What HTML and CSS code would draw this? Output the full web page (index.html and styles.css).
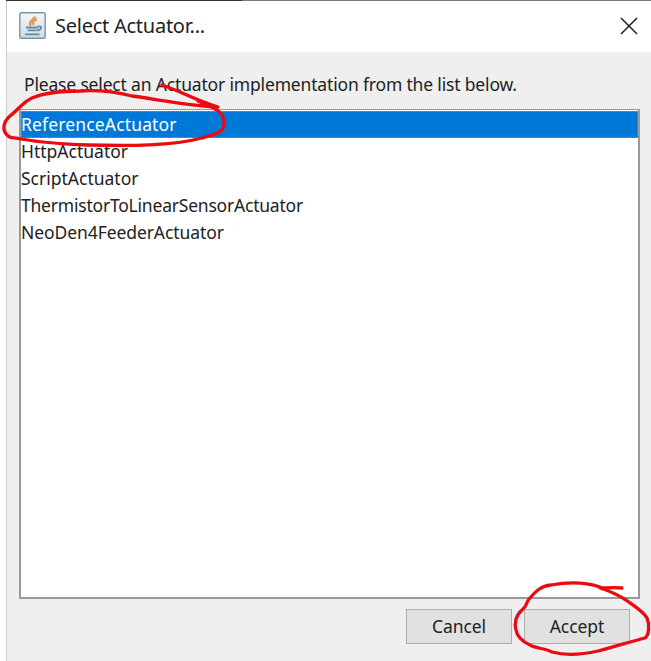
FILE: index.html
```html
<!DOCTYPE html>
<html lang="en">
<head>
<meta charset="utf-8">
<title>Select Actuator...</title>
<link rel="stylesheet" href="styles.css">
</head>
<body>
<div class="backdrop"></div>
<main class="dialog">
  <header class="titlebar">
    <svg class="java" viewBox="0 0 27 27">
      <defs><linearGradient id="g" x1="0" y1="0" x2="0" y2="1"><stop offset="0" stop-color="#f4f6f7"/><stop offset="1" stop-color="#cfdde6"/></linearGradient></defs>
      <rect x=".8" y=".8" width="25.4" height="25.4" rx="1.5" fill="url(#g)" stroke="#7893a6" stroke-width="1.4"/>
      <path d="M15.500 4.500C17 7.500 8 9 12 14M18 7.500C13 9 13 10.500 15 13" fill="none" stroke="#e39a58" stroke-width="2.600"/>
      <path d="M7 15.500H19M8.500 18.300H17.500M19 14.500C24 13.500 22.500 18 18 18.500M6 22.300H20.500" fill="none" stroke="#6389a3" stroke-width="1.800"/>
    </svg>
    <h1 class="title">Select Actuator...</h1>
    <svg class="close" viewBox="0 0 18 18"><path d="M1 1L17 17M17 1L1 17" stroke="#1c1c1c" stroke-width="1.500"/></svg>
  </header>
  <section class="content">
    <p class="prompt">Please select an Actuator implementation from the list below.</p>
    <ul class="list">
      <li class="item selected">ReferenceActuator</li>
      <li class="item">HttpActuator</li>
      <li class="item">ScriptActuator</li>
      <li class="item long">ThermistorToLinearSensorActuator</li>
      <li class="item feeder">NeoDen4FeederActuator</li>
    </ul>
    <footer class="actions">
      <button class="button">Cancel</button>
      <button class="button">Accept</button>
    </footer>
  </section>
</main>
<svg class="marks" viewBox="0 0 651 661">
  <path d="M162 85C178 90 195 100 218 107C190 106 155 99 132 96C112 91 96 90 80 91C61 91 44 93 32 98C23 102 18 110 10 116C3 122 2 130 7 135C10 139 14 137 21 139C38 142 58 144 88 145C130 146 172 146 202 138C216 134 224 132 224 124C225 113 219 110 198 101"/>
  <path d="M622 588C612 587 607 588 600 588C610 591 618 595 626 600C634 606 643 611 647 618C650 625 649 635 645 638C632 641 614 647 598 651C580 655 563 655 552 652C545 648 537 649 530 645C521 641 517 636 516 630C514 623 516 615 522 610C528 606 525 602 530 598C536 591 541 586 551 585C573 581 588 583 600 587"/>
</svg>
</body>
</html>
```
FILE: styles.css
```css
* { box-sizing: border-box; }
body { margin: 0; width: 651px; height: 661px; overflow: hidden; background: #fff; color: #222; font-family: "Noto Sans", sans-serif; }
.backdrop { height: 1px; margin-left: 6px; background: linear-gradient(90deg, #303030 236px, #777 236px); }
.dialog { display: flex; flex-direction: column; height: 660px; margin-left: 6px; border-left: 1px solid #ccc; }
.titlebar { display: flex; align-items: center; height: 51px; padding: 0 13px 2px 12px; background: #fff; }
.java { width: 27px; height: 27px; }
.title { flex: 1; margin: 0 0 0 9px; font-size: 20px; font-weight: 400; line-height: 30px; letter-spacing: -.25px; }
.close { width: 18px; height: 18px; }
.content { flex: 1; display: flex; flex-direction: column; padding: 19px 11px 16px 12px; background: #efefef; }
.prompt { margin: 0 0 12px 5px; font-size: 17.500px; line-height: 26px; letter-spacing: -.17px; white-space: nowrap; }
.list { height: 490px; margin: 0; padding: 1px 0 0; border: 2px solid #999; border-width: 1px 2px 2px; background: #fff; list-style: none; }
.item { height: 27px; font-size: 17.500px; line-height: 27px; white-space: nowrap; }
.long { letter-spacing: -.21px; }
.feeder { letter-spacing: -.08px; }
.selected { color: #fff; background: #0078d7; outline: 1px dotted #b09070; outline-offset: -1px; letter-spacing: .15px; }
.actions { display: flex; justify-content: flex-end; gap: 12px; padding: 10px 10px 0 0; }
.button { width: 106px; height: 35px; padding: 0 0 2px; border: 1px solid #adadad; background: #e1e1e1; color: #222; font: 17.500px "Noto Sans", sans-serif; letter-spacing: -.05px; }
.marks { position: absolute; inset: 0; width: 651px; height: 661px; fill: none; stroke: #ec0910; stroke-width: 3.300; stroke-linecap: round; stroke-linejoin: round; pointer-events: none; }
```
